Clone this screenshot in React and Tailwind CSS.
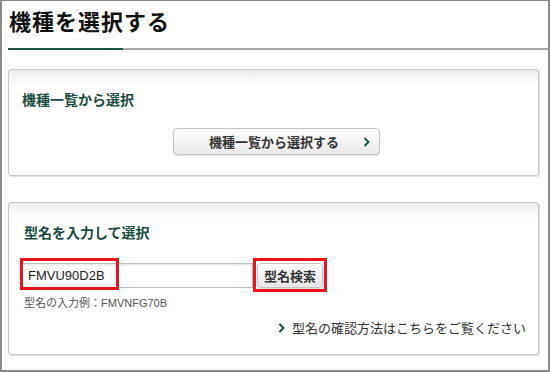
import { useState } from "react";

const jp = "font-['Noto_Sans_CJK_JP','Noto_Sans',sans-serif]";

function Card({ children, className }) {
  return (
    <div
      className={`border border-[#c9c9c9] rounded-[3px] bg-[linear-gradient(to_bottom,#ebebeb,#ffffff_16px)] shadow-[1px_1px_0_#e2e2e2] ${className}`}
    >
      {children}
    </div>
  );
}

function Chevron({ className }) {
  return (
    <svg width="7" height="10" viewBox="0 0 7 10" className={className}>
      <path d="M1.5 1 L5.5 5 L1.5 9" fill="none" stroke="#1b4a40" strokeWidth="1.8" />
    </svg>
  );
}

function App() {
  const [model, setModel] = useState("FMVU90D2B");

  return (
    <div className={`w-[550px] h-[372px] bg-white border-t border-l-2 border-r-2 border-b-2 border-[#8a8a8a] ${jp}`}>
      {/* Page title */}
      <h1 className="pl-[7px] pt-[2px] text-[22px] leading-[34px] font-bold text-[#111] tracking-[1px]">
        機種を選択する
      </h1>
      <div className="flex items-center pl-[6px] mt-[11px]">
        <div className="w-[115px] h-[2px] bg-[#1d5446]" />
        <div className="flex-1 h-[2px] bg-[#a9a9a9]" />
      </div>

      {/* Select from list */}
      <Card className="ml-[6px] mr-[9px] mt-[19px] pt-[19px] pb-[20px]">
        <h2 className="pl-[13px] text-[14px] leading-[20px] font-bold text-[#1b4a40]">
          機種一覧から選択
        </h2>
        <button className="ml-[164px] mt-[19px] w-[207px] h-[27px] flex items-center border border-[#c4c4c4] rounded-[4px] bg-[linear-gradient(to_bottom,#ffffff,#e9e9e9)] shadow-[0_1px_1px_rgba(0,0,0,0.12)]">
          <span className="flex-1 pl-[23px] text-[13px] font-bold text-[#333] text-center">
            機種一覧から選択する
          </span>
          <Chevron className="mr-[9px] ml-[12px]" />
        </button>
      </Card>

      {/* Enter model name */}
      <Card className="ml-[6px] mr-[9px] mt-[26px] pt-[19px] pb-[17px]">
        <h2 className="pl-[15px] text-[14px] leading-[20px] font-bold text-[#1b4a40]">
          型名を入力して選択
        </h2>
        <div className="relative flex items-center pl-[13px] mt-[21px]">
          <input
            value={model}
            onChange={(e) => setModel(e.target.value)}
            className="w-[231px] h-[25px] border border-[#bdbdbd] px-[5px] text-[13px] text-[#222] font-['Liberation_Sans',sans-serif] shadow-[inset_0_1px_2px_rgba(0,0,0,0.12)] outline-none"
          />
          <button className="ml-[4px] w-[66px] h-[25px] border border-[#c4c4c4] rounded-[4px] bg-[linear-gradient(to_bottom,#ffffff,#e6e6e6)] text-[13px] font-bold text-[#333] shadow-[0_1px_1px_rgba(0,0,0,0.12)]">
            型名検索
          </button>
          {/* red annotation boxes */}
          <div className="absolute left-[11px] top-[-5px] w-[99px] h-[32px] border-[3px] border-[#e8131d] pointer-events-none" />
          <div className="absolute left-[244px] top-[-5px] w-[74px] h-[34px] border-[3px] border-[#e8131d] pointer-events-none" />
        </div>
        <p className="pl-[15px] mt-[6px] text-[11px] leading-[16px] text-[#555]">
          型名の入力例：<span className="font-['Liberation_Sans',sans-serif]">FMVNFG70B</span>
        </p>
        <div className="flex items-center justify-end pr-[12px] mt-[8px]">
          <Chevron className="mr-[7px]" />
          <a className="text-[13px] leading-[18px] text-[#333]">型名の確認方法はこちらをご覧ください</a>
        </div>
      </Card>
    </div>
  );
}

export default App;
